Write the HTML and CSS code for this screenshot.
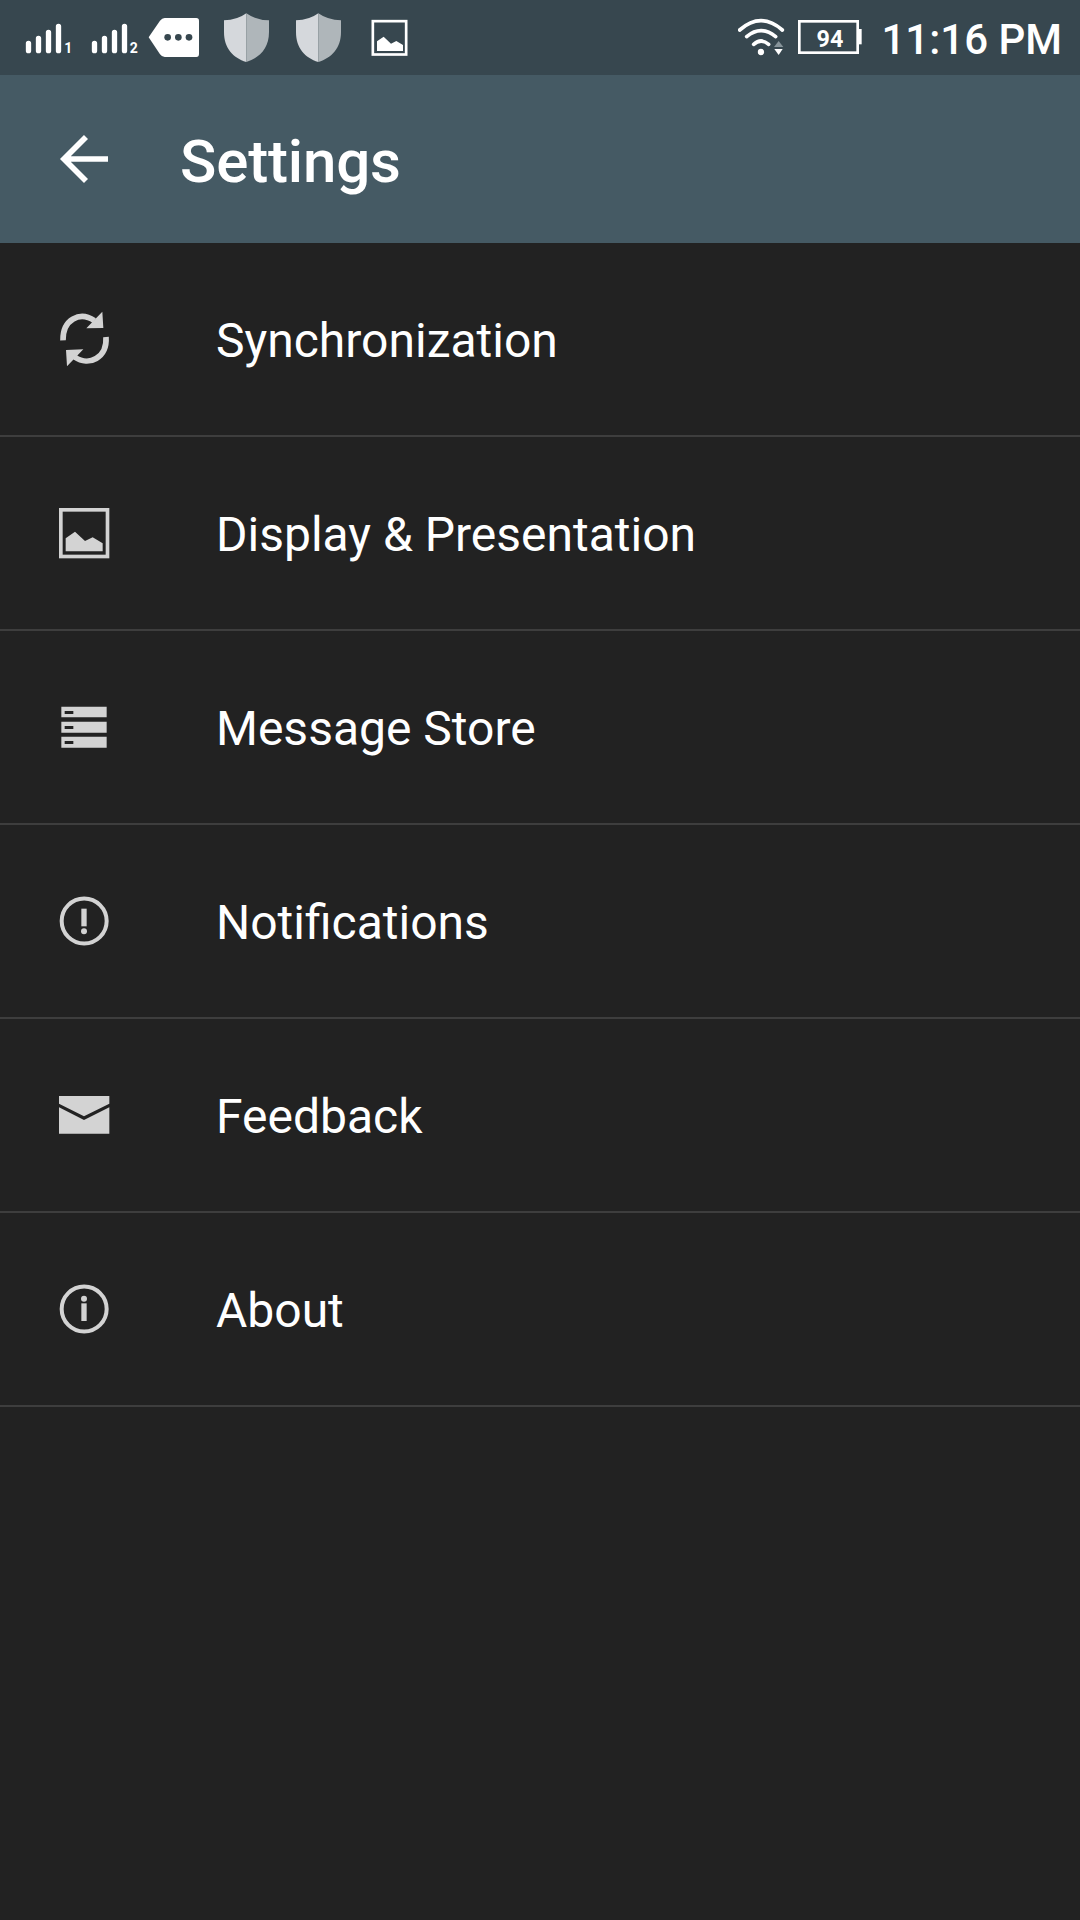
FILE: index.html
```html
<!DOCTYPE html>
<html lang="en">
<head>
<meta charset="utf-8">
<title>Settings</title>
<link rel="stylesheet" href="styles.css">
</head>
<body>
<header class="status-bar">
  <div class="status-group">
    <svg class="signal" width="48" height="75" viewBox="72 0 144 225">
      <path class="bars" d="M85.500 130V152M115.500 115V152M145.500 97V152M175.500 79V152"/>
      <text x="193" y="158">1</text>
    </svg>
    <svg class="signal signal-second" width="48" height="75" viewBox="72 0 144 225">
      <path class="bars" d="M85.500 130V152M115.500 115V152M145.500 97V152M175.500 79V152"/>
      <text x="191" y="158">2</text>
    </svg>
    <svg class="message-tag" width="52" height="75" viewBox="444 0 156 225">
      <path fill="#fff" d="M446 112L480 62Q486 54 494 54H589Q597 54 597 62V162Q597 171 589 171H494Q486 171 480 163Z"/>
      <g fill="#37474f"><circle cx="503" cy="112" r="10"/><circle cx="535" cy="112" r="10"/><circle cx="567" cy="112" r="10"/></g>
    </svg>
    <svg class="shield" width="48" height="75" viewBox="66 0 144 225">
      <path fill="#d5d8dc" d="M139 40Q112 60 72 61V96C72 145 99 173 139 186Z"/>
      <path fill="#afb6ba" d="M139 40Q167 60 207 61V96C207 145 179 173 139 186Z"/>
    </svg>
    <svg class="shield shield-second" width="48" height="75" viewBox="66 0 144 225">
      <path fill="#d5d8dc" d="M139 40Q112 60 72 61V96C72 145 99 173 139 186Z"/>
      <path fill="#afb6ba" d="M139 40Q167 60 207 61V96C207 145 179 173 139 186Z"/>
    </svg>
    <svg class="picture" width="40" height="75" viewBox="510 0 120 225">
      <rect x="518.500" y="63.500" width="100" height="100" fill="none" stroke="#fff" stroke-width="8"/>
      <path fill="#fff" d="M531 124L551 110L573 131L589 123L609 135V153H531Z"/>
    </svg>
  </div>
  <div class="status-group">
    <svg width="48" height="75" viewBox="54 0 144 225">
      <g fill="none" stroke="#fff" stroke-width="11" stroke-linecap="round">
        <path d="M59 90Q123 34 187 90M80 110Q123 74 167 110M101 133Q123 113 146 133"/>
      </g>
      <circle cx="123" cy="156" r="9.500" fill="#fff"/>
      <path fill="#87949a" d="M162 141L176 123L190 141Z"/>
      <path fill="#fff" d="M163 147H188L176 165Z"/>
    </svg>
    <svg class="battery" width="66" height="75" viewBox="234 0 198 225">
      <rect x="238" y="64" width="175" height="94" fill="none" stroke="#fff" stroke-width="8"/>
      <path fill="#fff" d="M414 87H425V133H414Z"/>
      <text x="330" y="140" text-anchor="middle">94</text>
    </svg>
    <span class="clock">11:16 PM</span>
  </div>
</header>
<div class="app-bar">
  <svg width="60" height="60" viewBox="42 57 180 180">
    <path fill="none" stroke="#fff" stroke-width="17" d="M204 147H74M138 81L72 147L138 213"/>
  </svg>
  <h1 class="title">Settings</h1>
</div>
<ul class="settings">
  <li class="row">
    <svg width="60" height="60" viewBox="42 57 180 180">
      <g fill="none" stroke="#d3d3d3" stroke-width="17">
        <path d="M69 151C68 88 120 63 163 92M198 141C202 203 147 231 104 201"/>
      </g>
      <path fill="#d3d3d3" d="M187 65L190 114L139 115ZM78 180L130 178L81 229Z"/>
    </svg>
    <span class="label">Synchronization</span>
  </li>
  <li class="row">
    <svg width="60" height="60" viewBox="42 39 180 180">
      <rect x="62.500" y="59.500" width="140" height="140" fill="none" stroke="#d3d3d3" stroke-width="11"/>
      <path fill="#d3d3d3" d="M77 145L105 125L135 153L158 142L188 160V184H77Z"/>
    </svg>
    <span class="label">Display &amp; Presentation</span>
  </li>
  <li class="row">
    <svg width="60" height="60" viewBox="42 51 180 180">
      <path fill="#d3d3d3" d="M64 80H200V112H64ZM64 125H200V158H64ZM64 170H200V203H64Z"/>
      <path fill="#222" d="M74 93H100V102H74ZM74 138H100V147H74ZM74 183H100V192H74Z"/>
    </svg>
    <span class="label">Message Store</span>
  </li>
  <li class="row">
    <svg width="60" height="60" viewBox="42 48 180 180">
      <circle cx="132.500" cy="138" r="67.500" fill="none" stroke="#d3d3d3" stroke-width="12"/>
      <path fill="#d3d3d3" d="M124 101H140V154H124Z"/><circle cx="132" cy="169" r="9" fill="#d3d3d3"/>
    </svg>
    <span class="label">Notifications</span>
  </li>
  <li class="row">
    <svg width="60" height="60" viewBox="42 45 180 180">
      <path fill="#d3d3d3" d="M57 78H208V101L132 139L57 101ZM57 112L132 150L208 112V191H57Z"/>
    </svg>
    <span class="label">Feedback</span>
  </li>
  <li class="row">
    <svg width="60" height="60" viewBox="42 42 180 180">
      <circle cx="132.500" cy="132" r="67.500" fill="none" stroke="#d3d3d3" stroke-width="12"/>
      <path fill="#d3d3d3" d="M124 115H140V168H124Z"/><circle cx="132" cy="101" r="9" fill="#d3d3d3"/>
    </svg>
    <span class="label">About</span>
  </li>
</ul>
</body>
</html>
```
FILE: styles.css
```css
body {
  margin: 0;
  min-height: 1920px;
  background: #222;
  color: #fff;
  font-family: Roboto, sans-serif;
}

svg {
  display: block;
  flex: none;
}

.status-bar {
  display: flex;
  justify-content: space-between;
  box-sizing: border-box;
  height: 75px;
  padding: 0 18px 0 24px;
  background: #37474f;
}

.status-group {
  display: flex;
}

.signal .bars {
  fill: none;
  stroke: #fff;
  stroke-width: 16;
  stroke-linecap: round;
}

.signal text {
  fill: #fff;
  font-size: 42px;
  font-weight: 700;
}

.signal-second {
  margin-left: 18px;
}

.message-tag {
  margin-left: 10px;
}

.shield {
  margin-left: 22px;
}

.shield-second {
  margin-left: 24px;
}

.picture {
  margin-left: 28px;
}

.battery {
  margin-left: 12px;
}

.battery text {
  fill: #fff;
  font-size: 70px;
  font-weight: 700;
}

.clock {
  margin-left: 17px;
  padding-top: 2px;
  font-size: 42px;
  font-weight: 500;
  line-height: 75px;
  white-space: nowrap;
}

.app-bar {
  display: flex;
  align-items: center;
  gap: 66px;
  height: 168px;
  padding-left: 54px;
  background: #455a64;
}

.title {
  margin: 0;
  padding-top: 5px;
  font-size: 60px;
  font-weight: 500;
  line-height: 70px;
  letter-spacing: -0.15px;
}

.settings {
  margin: 0;
  padding: 0;
  list-style: none;
}

.row {
  display: flex;
  align-items: center;
  gap: 102px;
  height: 192px;
  padding-left: 54px;
  border-bottom: 2px solid #3e3e3e;
}

.label {
  padding-top: 3px;
  font-size: 48px;
  line-height: 56px;
}
```
